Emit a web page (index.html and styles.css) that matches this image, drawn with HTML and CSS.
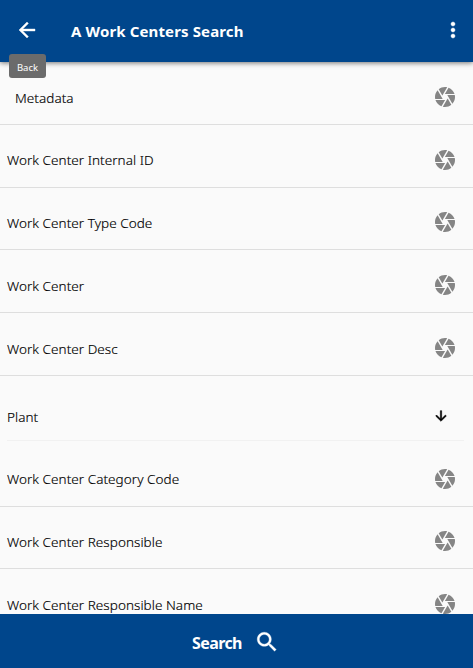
FILE: index.html
```
<!DOCTYPE html>
<html lang="en">
<head>
<meta charset="utf-8">
<title>A Work Centers Search</title>
<link rel="stylesheet" href="styles.css">
</head>
<body>
<svg class="defs" aria-hidden="true">
  <symbol id="camera" viewBox="0 0 24 24"><path d="M9.4 10.5l4.77-8.26C13.47 2.09 12.75 2 12 2c-2.4 0-4.6.85-6.32 2.25l3.66 6.35.06-.1zM21.54 9c-.92-2.92-3.15-5.26-6-6.34L11.88 9h9.66zm.26 1h-7.49l.29.5 4.76 8.25C21 16.97 22 14.61 22 12c0-.69-.07-1.35-.2-2zM8.54 12l-3.9-6.75C3.01 7.03 2 9.39 2 12c0 .69.07 1.35.2 2h7.49l-1.15-2zm-6.08 3c.92 2.92 3.15 5.26 6 6.34L12.12 15H2.46zm11.27 0l-3.9 6.76c.7.15 1.42.24 2.17.24 2.4 0 4.6-.85 6.32-2.25l-3.66-6.35-.93 1.6z"/></symbol>
</svg>
<div class="app">
  <header class="bar">
    <button class="back" aria-label="Back"><svg viewBox="0 0 24 24"><path d="M20 11H7.83l5.59-5.59L12 4l-8 8 8 8 1.41-1.41L7.83 13H20v-2z"/></svg><span class="tip">Back</span></button>
    <h1>A Work Centers Search</h1>
    <button class="more" aria-label="More"><svg viewBox="0 0 24 24"><path d="M12 8c1.1 0 2-.9 2-2s-.9-2-2-2-2 .9-2 2 .9 2 2 2zm0 2c-1.1 0-2 .9-2 2s.9 2 2 2 2-.9 2-2-.9-2-2-2zm0 6c-1.1 0-2 .9-2 2s.9 2 2 2 2-.9 2-2-.9-2-2-2z"/></svg></button>
  </header>
  <main class="list">
    <div class="row meta"><span>Metadata</span><svg><use href="#camera"/></svg></div>
    <div class="row raised"><span>Work Center Internal ID</span><svg><use href="#camera"/></svg></div>
    <div class="row short"><span>Work Center Type Code</span><svg><use href="#camera"/></svg></div>
    <div class="row"><span>Work Center</span><svg><use href="#camera"/></svg></div>
    <div class="row"><span>Work Center Desc</span><svg><use href="#camera"/></svg></div>
    <div class="group"><span>Plant</span><svg viewBox="0 0 24 24"><path d="M20 12l-1.41-1.41L13 16.17V4h-2v12.17l-5.58-5.59L4 12l8 8 8-8z"/></svg></div>
    <div class="row raised"><span>Work Center Category Code</span><svg><use href="#camera"/></svg></div>
    <div class="row short"><span>Work Center Responsible</span><svg><use href="#camera"/></svg></div>
    <div class="row"><span>Work Center Responsible Name</span><svg><use href="#camera"/></svg></div>
  </main>
  <button class="search"><span>Search</span><svg viewBox="0 0 24 24"><path d="M15.5 14h-.79l-.28-.27C15.41 12.59 16 11.11 16 9.5 16 5.91 13.09 3 9.5 3S3 5.91 3 9.5 5.91 16 9.5 16c1.61 0 3.09-.59 4.23-1.57l.27.28v.79l5 4.99L20.49 19l-4.99-5zm-6 0C7.01 14 5 11.99 5 9.5S7.01 5 9.5 5 14 7.01 14 9.5 11.99 14 9.5 14z"/></svg></button>
</div>
</body>
</html>
```
FILE: styles.css
```
* { box-sizing: border-box; }
body { margin: 0; font-family: "Noto Sans", "Open Sans", sans-serif; }
button { border: 0; padding: 0; background: none; color: inherit; font: inherit; }
svg { display: block; width: 24px; height: 24px; flex: none; fill: currentColor; }
.defs { position: absolute; width: 0; height: 0; }
.app { display: flex; flex-direction: column; height: 668px; overflow: hidden; background: #fafafa; color: #000; }
.bar { display: flex; align-items: center; flex: none; height: 62px; padding: 0 8px 2px 15px; background: #00468c; color: #fff; box-shadow: 0 1px 5px rgba(0, 0, 0, .55); z-index: 1; }
.bar svg { stroke: currentColor; stroke-width: .4; }
.back { position: relative; width: 24px; margin-right: 32px; }
.tip { position: absolute; top: 36px; left: -6px; width: 37px; height: 24px; border-radius: 3px; background: #6b6b6b; font-size: 9.5px; line-height: 27px; text-align: center; }
.bar h1 { flex: 1; margin: 1px 0 0; font-size: 15px; letter-spacing: .13px; line-height: 22px; font-weight: 700; white-space: nowrap; }
.list { flex: 1; min-height: 0; overflow: hidden; font-size: 13.5px; font-weight: 350; letter-spacing: .05px; line-height: 20px; }
.row { display: flex; align-items: flex-start; justify-content: space-between; height: 63px; padding: 23px 16px 0 7px; border-bottom: 1px solid #dedede; }
.row span { padding-top: 3px; -webkit-text-stroke: .15px #000; }
.row svg { color: #858585; }
.raised span { padding-top: 2px; }
.short { height: 62px; padding-top: 22px; }
.meta { padding-left: 15px; }
.group { display: flex; align-items: center; justify-content: space-between; height: 65px; margin: 0 9px 3px 7px; padding: 16px 15px 0 0; border-bottom: 1px solid #f1f1f1; }
.group span { padding-top: 2px; -webkit-text-stroke: .15px #000; }
.group svg { width: 16px; height: 16px; color: #000; stroke: currentColor; stroke-width: .8; }
.search { display: flex; align-items: center; justify-content: center; flex: none; height: 54px; padding-right: 1px; gap: 12px; background: #00468c; color: #fff; font-size: 16px; letter-spacing: -.6px; font-weight: 700; }
.search span { padding-top: 4px; }
.search svg { width: 26px; height: 26px; margin-top: 1px; stroke: currentColor; stroke-width: .3; }
```
